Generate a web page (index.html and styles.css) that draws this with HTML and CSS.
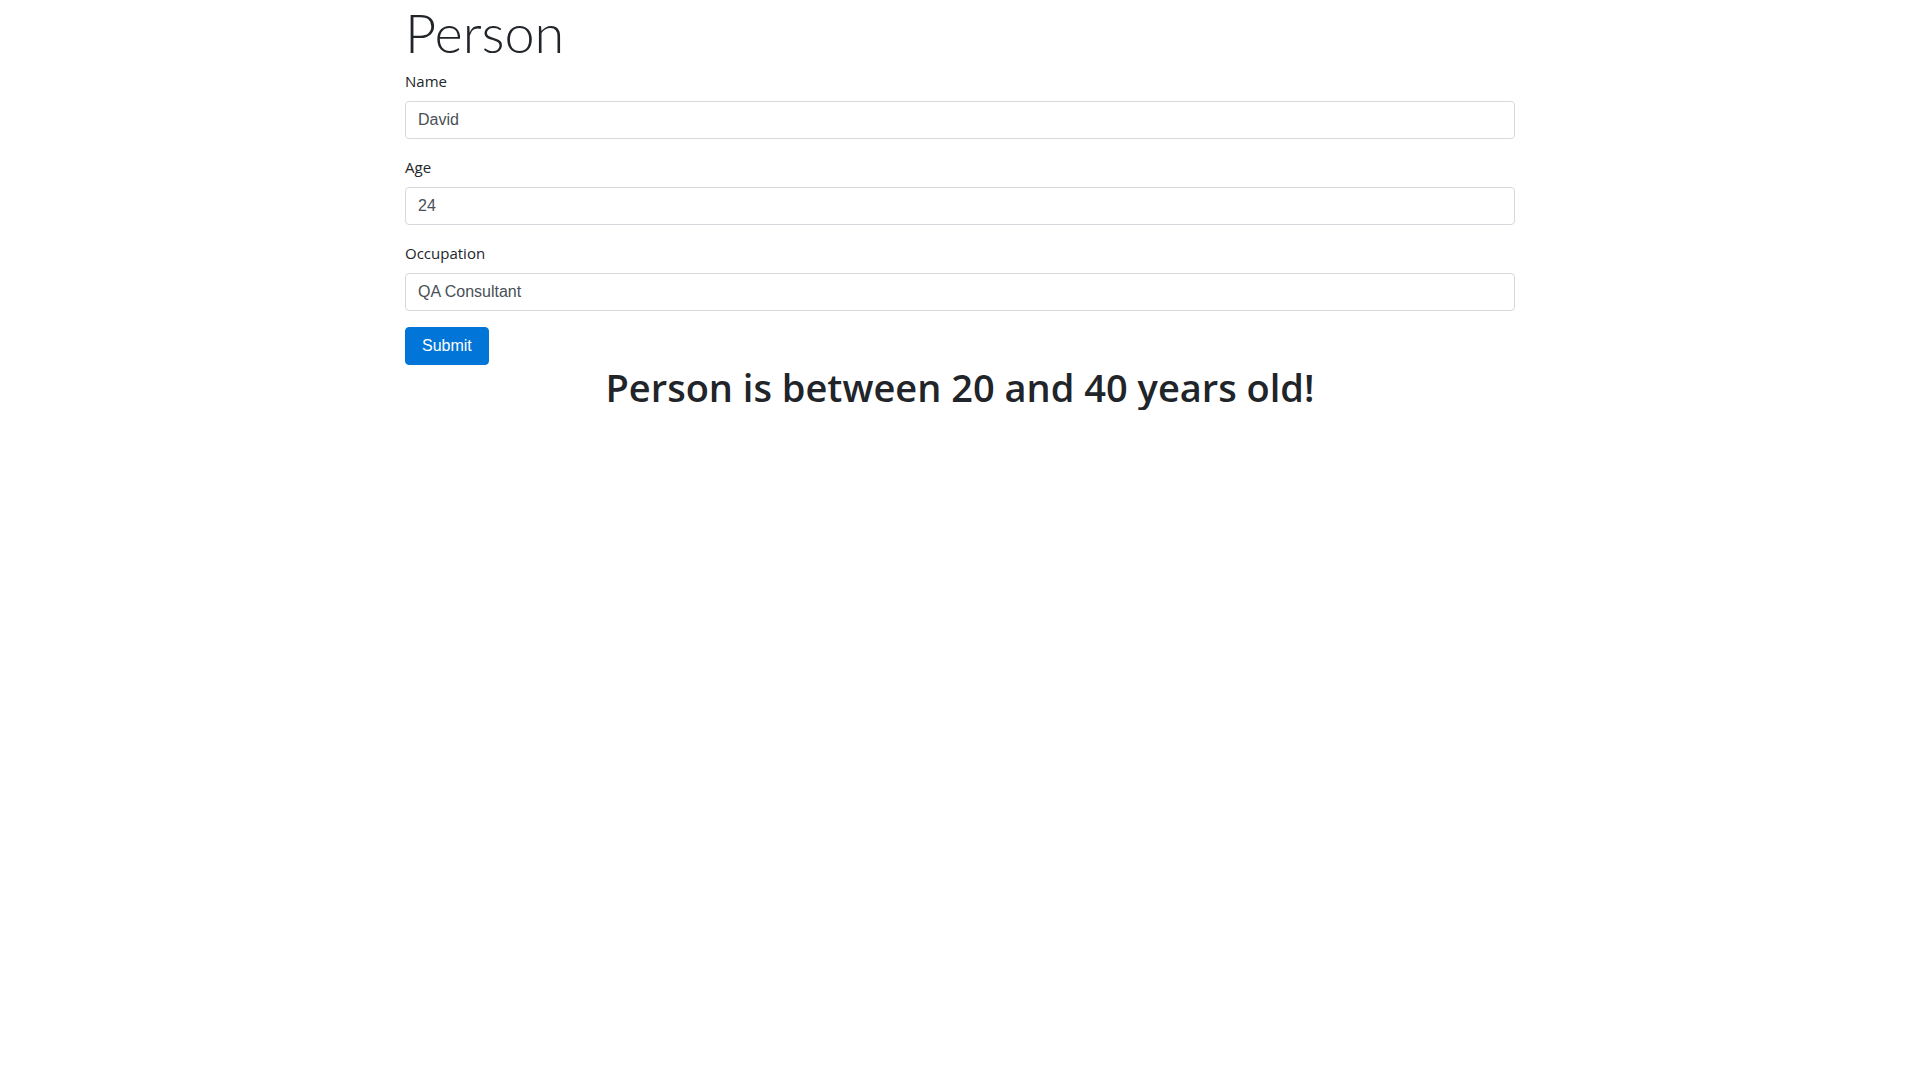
FILE: index.html
```html
<!DOCTYPE html>
<html lang="en">
<head>
<meta charset="utf-8">
<title>Person</title>
<link rel="stylesheet" href="styles.css">
</head>
<body>
<div class="container">
  <h1 class="title">Person</h1>
  <form class="form">
    <div class="form-group">
      <label class="label" for="name">Name</label>
      <input class="form-control" id="name" type="text" value="David">
    </div>
    <div class="form-group">
      <label class="label" for="age">Age</label>
      <input class="form-control" id="age" type="text" value="24">
    </div>
    <div class="form-group">
      <label class="label" for="occupation">Occupation</label>
      <input class="form-control" id="occupation" type="text" value="QA Consultant">
    </div>
    <button class="btn-primary" type="button">Submit</button>
  </form>
  <h2 class="result">Person is between 20 and 40 years old!</h2>
</div>
</body>
</html>
```
FILE: styles.css
```css
html, body {
  margin: 0;
  padding: 0;
  background: #fff;
}
body {
  font-family: "Open Sans", "Noto Sans", sans-serif;
  color: #212529;
}
.container {
  width: 1110px;
  margin: 0 auto;
}
.title {
  font-family: Lato, "Open Sans", sans-serif;
  font-weight: 300;
  font-size: 54px;
  line-height: 65px;
  margin: 0 0 4px;
  color: #212529;
}
.form {
  margin: 0;
}
.form-group {
  display: flex;
  flex-direction: column;
  margin-bottom: 16px;
}
.label {
  display: block;
  font-size: 15px;
  line-height: 24px;
  margin-bottom: 8px;
  color: #212529;
}
.form-control {
  display: block;
  box-sizing: border-box;
  width: 100%;
  height: 38px;
  margin: 0;
  padding: 6px 12px;
  font-family: "Liberation Sans", Arial, sans-serif;
  font-size: 16px;
  line-height: 24px;
  color: #495057;
  background: #fff;
  border: 1px solid #d5d9dd;
  border-radius: 4px;
  outline: none;
}
.btn-primary {
  display: block;
  box-sizing: border-box;
  height: 38px;
  margin: 0;
  padding: 6px 16px;
  font-family: "Liberation Sans", Arial, sans-serif;
  font-size: 16px;
  line-height: 24px;
  color: #fff;
  background: #0275d8;
  border: 1px solid #0275d8;
  border-radius: 4px;
  cursor: pointer;
}
.result {
  margin: 0;
  font-family: "Open Sans", "Noto Sans", sans-serif;
  font-weight: 600;
  font-size: 38px;
  line-height: 45px;
  text-align: center;
  color: #212529;
}
```
